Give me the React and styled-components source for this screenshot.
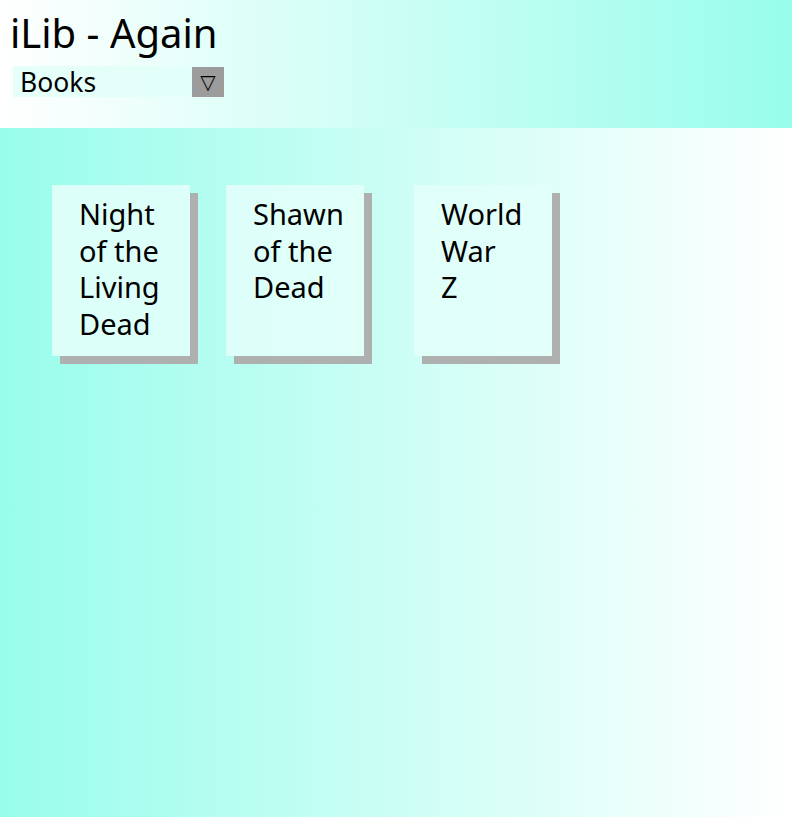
import React, { useState } from "react";
import styled, { createGlobalStyle } from "styled-components";

const GlobalStyle = createGlobalStyle`
  html, body {
    margin: 0;
    padding: 0;
    height: 100%;
  }
  body {
    font-family: "Noto Sans", "Open Sans", sans-serif;
    color: #000;
  }
  #root {
    min-height: 100vh;
    display: flex;
    flex-direction: column;
  }
`;

const aqua = "#98fdeb";
const paper = "rgba(226, 255, 250, 0.9)";

const Header = styled.header`
  height: 128px;
  box-sizing: border-box;
  padding: 9px 10px 0 10px;
  background: linear-gradient(to right, #ffffff, ${aqua});
`;

const Title = styled.h1`
  margin: 0;
  font-size: 40px;
  font-weight: 400;
  line-height: 48px;
`;

const Select = styled.div`
  margin: 9px 0 0 3px;
  width: 211px;
  height: 31px;
  display: flex;
  align-items: center;
  justify-content: space-between;
  background: ${paper};
`;

const SelectLabel = styled.span`
  font-size: 26.5px;
  padding-left: 7px;
`;

const ArrowBtn = styled.span`
  width: 32px;
  height: 30px;
  background: #9c9c9c;
  display: flex;
  align-items: center;
  justify-content: center;
  font-family: "DejaVu Sans", sans-serif;
  font-size: 20px;
  color: #000;
`;

const Shelf = styled.main`
  flex: 1;
  background: linear-gradient(to right, ${aqua}, #ffffff);
  padding: 57px 0 0 52px;
  display: flex;
  align-items: flex-start;
`;

const Card = styled.div`
  width: 138px;
  height: 171px;
  box-sizing: border-box;
  margin-left: ${(p) => p.offset}px;
  padding: 11px 0 0 27px;
  background: ${paper};
  box-shadow: 8px 8px 0 #adb0af;
  font-size: 29px;
  line-height: 36.7px;
`;

const books = [
  { title: ["Night", "of the", "Living", "Dead"], offset: 0 },
  { title: ["Shawn", "of the", "Dead"], offset: 36 },
  { title: ["World", "War", "Z"], offset: 50 },
];

const App = () => {
  const [kind] = useState("Books");
  return (
    <>
      <GlobalStyle />
      <Header>
        <Title>iLib - Again</Title>
        <Select>
          <SelectLabel>{kind}</SelectLabel>
          <ArrowBtn>▽</ArrowBtn>
        </Select>
      </Header>
      <Shelf>
        {books.map((b) => (
          <Card key={b.title.join(" ")} offset={b.offset}>
            {b.title.map((line) => (
              <div key={line}>{line}</div>
            ))}
          </Card>
        ))}
      </Shelf>
    </>
  );
};

export default App;
